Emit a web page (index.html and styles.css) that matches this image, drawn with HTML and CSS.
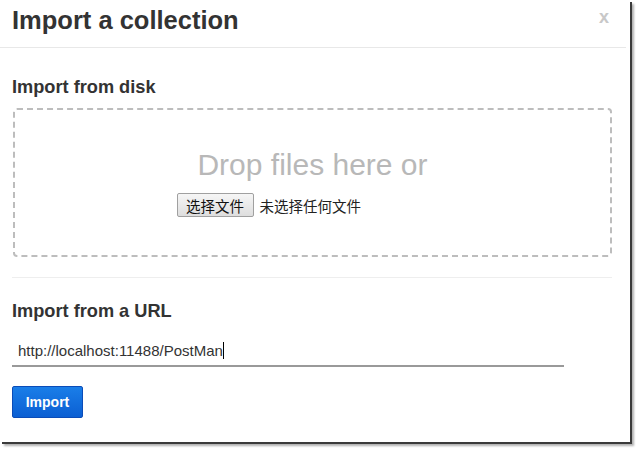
FILE: index.html
```html
<!DOCTYPE html>
<html lang="en">
<head>
    <meta charset="UTF-8">
    <meta name="viewport" content="width=device-width, initial-scale=1.0">
    <title>Import a collection</title>
    <link rel="stylesheet" href="styles.css">
</head>
<body>
    <div class="modal">
        <div class="modal-header">
            <h3>Import a collection</h3>
            <span class="close">x</span>
        </div>
        <div class="modal-body">
            <h4>Import from disk</h4>
            <div class="dropzone">
                <div class="drop-text">Drop files here or</div>
                <div class="file-row">
                    <button class="file-btn">选择文件</button>
                    <span class="file-status">未选择任何文件</span>
                </div>
            </div>
            <hr>
            <h4>Import from a URL</h4>
            <div class="url-field">
                <span class="url-value">http://localhost:11488/PostMan</span><span class="caret"></span>
            </div>
            <button class="btn-import">Import</button>
        </div>
    </div>
</body>
</html>
```

FILE: styles.css
```css
html, body {
    height: 450px;
}
body {
    margin: 0;
    background-color: #fff;
    font-family: 'Liberation Sans', Arial, 'Noto Sans CJK SC', sans-serif;
    color: #333;
}
.modal {
    width: 630px;
    height: 442px;
    background-color: #fff;
    box-shadow: 2px 2px 0 #3a3a3a, 4px 4px 2px #b0b0b0;
    overflow: hidden;
}
.modal-header {
    display: flex;
    justify-content: space-between;
    align-items: flex-start;
    height: 47px;
    border-bottom: 1px solid #e8e8e8;
    margin-right: 4px;
}
.modal-header h3 {
    margin: 0;
    padding: 6px 0 0 12px;
    font-size: 25.5px;
    font-weight: bold;
    color: #333;
}
.close {
    font-size: 18px;
    color: #c8c8c8;
    padding: 7px 17px 0 0;
    font-weight: bold;
}
.modal-body {
    padding: 0 18px 0 12px;
}
.modal-body h4 {
    margin: 0;
    font-size: 18.2px;
    font-weight: bold;
    color: #333;
}
.modal-body h4:first-child {
    padding-top: 29px;
}
.dropzone {
    margin-top: 10px;
    margin-left: 1px;
    height: 145px;
    border: 2px dashed #bdbdbd;
    border-radius: 4px;
    display: flex;
    flex-direction: column;
    align-items: center;
}
.drop-text {
    margin-top: 38px;
    font-size: 30px;
    color: #b8b8b8;
}
.file-row {
    margin-top: 11px;
    width: 272px;
    display: flex;
    align-items: center;
    font-family: 'Noto Sans CJK SC', sans-serif;
    font-size: 14.5px;
    color: #222;
}
.file-btn {
    font-family: 'Noto Sans CJK SC', sans-serif;
    font-size: 14.5px;
    color: #111;
    padding: 0 8px;
    width: 77px;
    height: 24px;
    border: 1px solid #a0a0a0;
    border-radius: 2px;
    background: linear-gradient(#f6f6f6, #dedede);
    margin-right: 6px;
}
hr {
    border: 0;
    border-top: 1px solid #eee;
    margin: 20px 0 23px 0;
}
.url-field {
    margin-top: 13px;
    width: 546px;
    height: 30px;
    border-bottom: 2px solid #999;
    padding-left: 6px;
    display: flex;
    align-items: center;
    font-size: 15px;
    color: #333;
}
.caret {
    display: inline-block;
    width: 1px;
    height: 17px;
    background-color: #000;
}
.btn-import {
    margin-top: 19px;
    width: 71px;
    height: 32px;
    border: 1px solid #0b4cb8;
    border-radius: 2px;
    background: linear-gradient(#1a7ee8, #0b5fd3);
    color: #fff;
    font-family: 'Liberation Sans', Arial, sans-serif;
    font-size: 14px;
    font-weight: bold;
}
```
